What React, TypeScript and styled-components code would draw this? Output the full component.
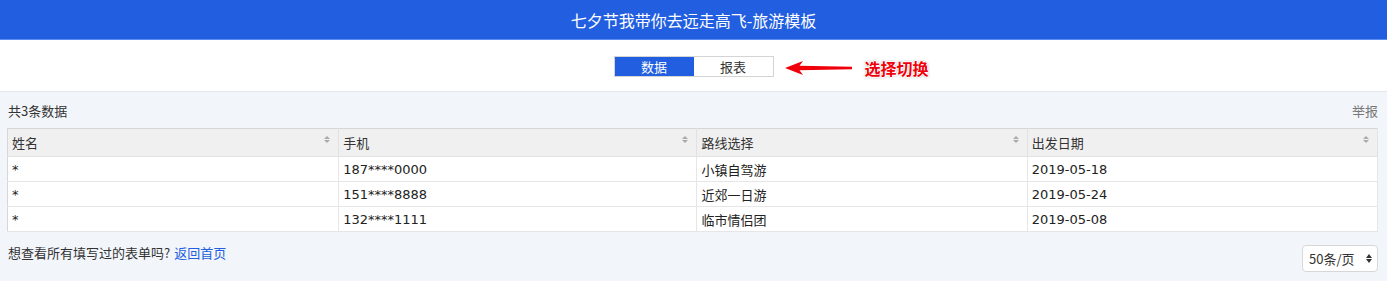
import React from 'react';
import styled, { createGlobalStyle } from 'styled-components';

const GlobalStyle = createGlobalStyle`
  html, body {
    margin: 0;
    padding: 0;
    background: #f2f5fa;
    font-family: 'Noto Sans CJK SC', 'Noto Sans', sans-serif;
    color: #333;
  }
`;

const Header = styled.div`
  height: 39px;
  background: #215ee0;
  border-bottom: 1px solid #5b8cf0;
  color: #fff;
  font-size: 16px;
  display: flex;
  align-items: center;
  justify-content: center;
`;

const SwitchBar = styled.div`
  height: 51px;
  background: #fff;
  border-bottom: 1px solid #e3e6eb;
  display: flex;
  align-items: center;
  justify-content: center;
  position: relative;
`;

const Toggle = styled.div`
  display: flex;
  border: 1px solid #d4d4d4;
  margin-top: 2px;
`;

const ToggleItem = styled.div<{ active?: boolean }>`
  width: 79px;
  height: 19px;
  display: flex;
  align-items: center;
  justify-content: center;
  font-size: 13px;
  background: ${({ active }) => (active ? '#215ee0' : '#fff')};
  color: ${({ active }) => (active ? '#fff' : '#333')};
`;

/* annotation drawn over the page, right of the toggle */
const Hint = styled.div`
  position: absolute;
  left: calc(50% + 91px);
  top: 16px;
  display: flex;
  align-items: center;
  gap: 12px;
`;

const HintText = styled.span`
  color: #f0000a;
  font-size: 16px;
  font-weight: 700;
  text-shadow: 1px 0 0 #fff, -1px 0 0 #fff, 0 1px 0 #fff, 0 -1px 0 #fff,
    0 0 3px rgba(0, 0, 0, 0.55);
`;

const Content = styled.div`
  padding: 0 9px 0 7px;
`;

const TopRow = styled.div`
  height: 36px;
  display: flex;
  align-items: center;
  justify-content: space-between;
  font-size: 13px;
  padding-left: 1px;
`;

const Report = styled.span`
  color: #777;
`;

const Table = styled.table`
  width: 100%;
  border-collapse: collapse;
  table-layout: fixed;
  background: #fff;
  border: 1px solid #d7d7d7;
  font-size: 13px;
`;

const Th = styled.th`
  height: 27px;
  background: #f0f0f0;
  text-align: left;
  font-weight: 400;
  padding: 0 4px;
  border-right: 1px solid #e2e2e2;
  border-bottom: 1px solid #e2e2e2;
  position: relative;
`;

const SortIcon = styled.span`
  position: absolute;
  right: 8px;
  top: 7px;
  display: flex;
  flex-direction: column;
  gap: 1px;
  &::before,
  &::after {
    content: '';
    border-left: 3px solid transparent;
    border-right: 3px solid transparent;
  }
  &::before {
    border-bottom: 3px solid #aaa;
  }
  &::after {
    border-top: 3px solid #aaa;
  }
`;

const Td = styled.td`
  height: 24px;
  padding: 0 4px;
  font-family: 'DejaVu Sans', 'Noto Sans CJK SC', sans-serif;
  color: #222;
  border-right: 1px solid #e6e6e6;
  border-bottom: 1px solid #e6e6e6;
`;

const Footer = styled.div`
  display: flex;
  justify-content: space-between;
  align-items: flex-start;
  margin-top: 13px;
  font-size: 13px;
  padding-left: 1px;
`;

const FooterText = styled.span`
  line-height: 18px;
  margin-top: -1px;
`;

const Link = styled.a`
  color: #215ee0;
  text-decoration: none;
  margin-left: 4px;
`;

const PageSize = styled.div`
  height: 27px;
  width: 76px;
  box-sizing: border-box;
  border: 1px solid #d7d7d7;
  border-radius: 4px;
  background: #fff;
  display: flex;
  align-items: center;
  justify-content: space-between;
  padding: 0 5px 0 6px;
  font-size: 13px;
`;

const Caret = styled.span`
  display: flex;
  flex-direction: column;
  gap: 1px;
  &::before,
  &::after {
    content: '';
    border-left: 3.5px solid transparent;
    border-right: 3.5px solid transparent;
  }
  &::before {
    border-bottom: 4px solid #333;
  }
  &::after {
    border-top: 4px solid #333;
  }
`;

const columns = [
  { title: '姓名', width: 331 },
  { title: '手机', width: 358 },
  { title: '路线选择', width: 330 },
  { title: '出发日期', width: 350 },
];

const rows = [
  ['*', '187****0000', '小镇自驾游', '2019-05-18'],
  ['*', '151****8888', '近郊一日游', '2019-05-24'],
  ['*', '132****1111', '临市情侣团', '2019-05-08'],
];

function Arrow() {
  return (
    <svg width='68' height='14' viewBox='0 0 68 14'>
      <path d='M0 7 L18 0 L14.5 4.8 L67 5.8 L67 8.2 L14.5 9.2 L18 14 Z' fill='#f0000a' />
    </svg>
  );
}

function App() {
  return (
    <>
      <GlobalStyle />
      <Header>七夕节我带你去远走高飞-旅游模板</Header>
      <SwitchBar>
        <Toggle>
          <ToggleItem active>数据</ToggleItem>
          <ToggleItem>报表</ToggleItem>
        </Toggle>
        <Hint>
          <Arrow />
          <HintText>选择切换</HintText>
        </Hint>
      </SwitchBar>
      <Content>
        <TopRow>
          <span>共3条数据</span>
          <Report>举报</Report>
        </TopRow>
        <Table>
          <colgroup>
            {columns.map((c) => (
              <col key={c.title} style={{ width: c.width }} />
            ))}
          </colgroup>
          <thead>
            <tr>
              {columns.map((c) => (
                <Th key={c.title}>
                  {c.title}
                  <SortIcon />
                </Th>
              ))}
            </tr>
          </thead>
          <tbody>
            {rows.map((r, i) => (
              <tr key={i}>
                {r.map((v, j) => (
                  <Td key={j}>{v}</Td>
                ))}
              </tr>
            ))}
          </tbody>
        </Table>
        <Footer>
          <FooterText>
            想查看所有填写过的表单吗?<Link href='#'>返回首页</Link>
          </FooterText>
          <PageSize>
            50条/页
            <Caret />
          </PageSize>
        </Footer>
      </Content>
    </>
  );
}

export default App;
